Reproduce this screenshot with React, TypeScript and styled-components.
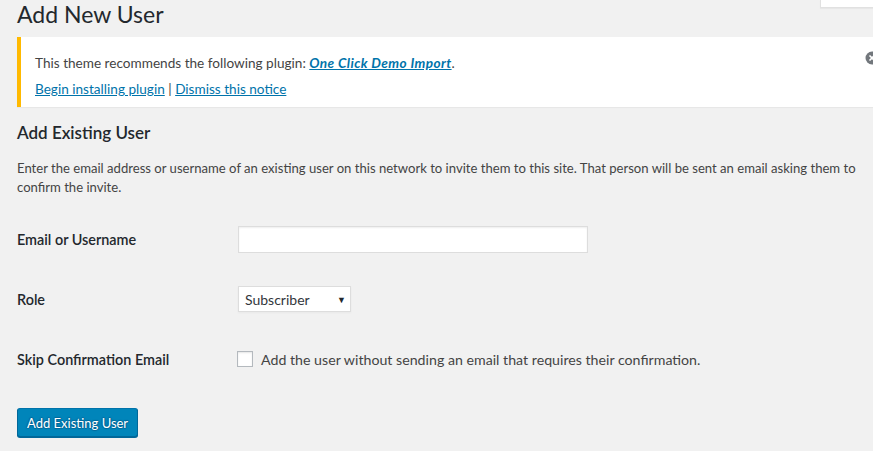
import React from "react";
import styled, { createGlobalStyle } from "styled-components";

const Global = createGlobalStyle`
  html, body { margin: 0; padding: 0; background: #f1f1f1; overflow: hidden; }
  body { font-family: "Segoe UI", Lato, "Open Sans", sans-serif; font-size: 13px; color: #444; }
  * { box-sizing: border-box; }
`;

const Page = styled.div`
  position: relative;
  width: 873px;
  height: 451px;
  padding: 0 0 0 17px;
`;

const HelpTab = styled.div`
  position: absolute;
  top: 0;
  right: 0;
  width: 53px;
  height: 8px;
  background: #fff;
  border-left: 1px solid #e1e1e1;
  border-bottom: 1px solid #e1e1e1;
  box-shadow: 0 1px 1px rgba(0, 0, 0, 0.04);
`;

const Title = styled.h1`
  margin: 0;
  font-size: 23px;
  line-height: 29px;
  font-weight: 400;
  color: #23282d;
`;

const Notice = styled.div`
  position: relative;
  margin-top: 8px;
  height: 70px;
  background: #fff;
  border-left: 4px solid #ffb900;
  box-shadow: 0 1px 1px rgba(0, 0, 0, 0.04);
  padding: 17px 12px 0 14px;
  display: flex;
  flex-direction: column;
  gap: 7px;
  color: #444;
`;

const NoticeLine = styled.p`
  margin: 0;
  line-height: 19px;
  font-size: 13.6px;
`;

const Link = styled.a<{ $strong?: boolean }>`
  color: #0073aa;
  text-decoration: underline;
  font-weight: ${(p) => (p.$strong ? 700 : 400)};
  font-style: ${(p) => (p.$strong ? "italic" : "normal")};
  letter-spacing: ${(p) => (p.$strong ? "0.4px" : "0")};
`;

const DismissIcon = styled.svg`
  position: absolute;
  right: -7px;
  top: 13px;
`;

const SectionTitle = styled.h2`
  margin: 14px 0 0;
  font-size: 17px;
  line-height: 23px;
  font-weight: 600;
  color: #23282d;
`;

const Intro = styled.p`
  margin: 15px 0 0;
  line-height: 19px;
  font-size: 13.1px;
  padding-right: 10px;
`;

const FormTable = styled.div`
  margin-top: 12px;
  display: grid;
  grid-template-columns: 220px 1fr;
  grid-auto-rows: 60px;
  align-items: center;
`;

const Label = styled.div`
  font-size: 14.4px;
  font-weight: 600;
  color: #23282d;
`;

const Field = styled.div`
  display: flex;
  align-items: center;
`;

const TextInput = styled.input`
  width: 350px;
  height: 27px;
  margin-left: 1px;
  border: 1px solid #ddd;
  box-shadow: inset 0 1px 2px rgba(0, 0, 0, 0.07);
  background: #fff;
  outline: none;
`;

const Select = styled.div`
  width: 113px;
  height: 26px;
  margin-left: 1px;
  border: 1px solid #ddd;
  box-shadow: 0 1px 2px rgba(0, 0, 0, 0.04);
  background: #fff;
  display: flex;
  align-items: center;
  justify-content: space-between;
  padding: 0 4px 0 6px;
  font-size: 14px;
  color: #32373c;
`;

const Arrow = styled.span`
  font-size: 9px;
  color: #23282d;
`;

const Checkbox = styled.span`
  width: 16px;
  height: 16px;
  border: 1px solid #b4b9be;
  background: #fff;
  box-shadow: inset 0 1px 2px rgba(0, 0, 0, 0.1);
  margin-right: 8px;
`;

const CheckText = styled.span`
  font-size: 14.2px;
  color: #444;
`;

const Button = styled.button`
  margin-top: 19px;
  height: 29px;
  padding: 0 9px;
  background: #0085ba;
  border: 1px solid;
  border-color: #0073aa #006799 #006799;
  border-radius: 3px;
  box-shadow: 0 1px 0 #006799;
  color: #fff;
  font-family: inherit;
  font-size: 13px;
  text-shadow: 0 -1px 1px #006799, 1px 0 1px #006799, 0 1px 1px #006799, -1px 0 1px #006799;
  cursor: pointer;
`;

export default function App() {
  return (
    <Page>
      <Global />
      <HelpTab />
      <Title>Add New User</Title>
      <Notice>
        <NoticeLine>
          This theme recommends the following plugin: <Link $strong href="#">One Click Demo Import</Link>.
        </NoticeLine>
        <NoticeLine>
          <Link href="#">Begin installing plugin</Link> | <Link href="#">Dismiss this notice</Link>
        </NoticeLine>
        <DismissIcon width="16" height="16" viewBox="0 0 16 16">
          <circle cx="8" cy="8" r="6.5" fill="#72777c" />
          <path d="M5.5 5.5 L10.5 10.5 M10.5 5.5 L5.5 10.5" stroke="#fff" strokeWidth="1.6" />
        </DismissIcon>
      </Notice>
      <SectionTitle>Add Existing User</SectionTitle>
      <Intro>
        Enter the email address or username of an existing user on this network to invite them to this site. That person will be sent an email asking them to confirm the invite.
      </Intro>
      <FormTable>
        <Label>Email or Username</Label>
        <Field>
          <TextInput type="text" />
        </Field>
        <Label>Role</Label>
        <Field>
          <Select>
            <span>Subscriber</span>
            <Arrow>▼</Arrow>
          </Select>
        </Field>
        <Label>Skip Confirmation Email</Label>
        <Field>
          <Checkbox />
          <CheckText>Add the user without sending an email that requires their confirmation.</CheckText>
        </Field>
      </FormTable>
      <Button>Add Existing User</Button>
    </Page>
  );
}
